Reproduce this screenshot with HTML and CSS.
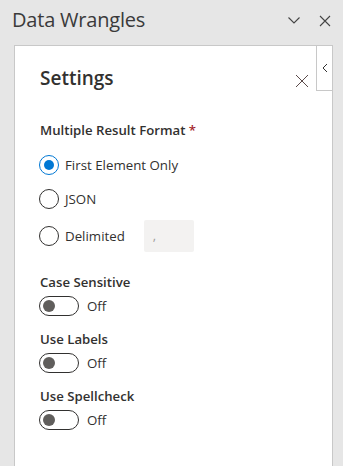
FILE: index.html
```html
<!DOCTYPE html>
<html>
<head>
<meta charset="utf-8">
<link rel="stylesheet" href="styles.css">
</head>
<body>
<div class="app">
  <header class="topbar">
    <div class="app-title">Data Wrangles</div>
    <div class="top-icons">
      <svg class="ico-chev" width="14" height="14" viewBox="0 0 14 14"><path d="M1.5 4.5 L7 10 L12.5 4.5" fill="none" stroke="#444" stroke-width="1.1"/></svg>
      <svg class="ico-x" width="12" height="12" viewBox="0 0 12 12"><path d="M1 1 L11 11 M11 1 L1 11" fill="none" stroke="#444" stroke-width="1.1"/></svg>
    </div>
  </header>
  <main class="panel">
    <div class="tab">
      <svg width="6" height="10" viewBox="0 0 6 10"><path d="M5 1 L1 5 L5 9" fill="none" stroke="#333" stroke-width="1"/></svg>
    </div>
    <div class="panel-head">
      <h1 class="panel-title">Settings</h1>
      <svg class="panel-close" width="14" height="14" viewBox="0 0 14 14"><path d="M1 1 L13 13 M13 1 L1 13" fill="none" stroke="#5a4a4a" stroke-width="1"/></svg>
    </div>
    <div class="field-label">Multiple Result Format <span class="req">*</span></div>
    <div class="choices">
      <div class="choice">
        <span class="radio checked"></span><span class="choice-text">First Element Only</span>
      </div>
      <div class="choice">
        <span class="radio"></span><span class="choice-text">JSON</span>
      </div>
      <div class="choice choice-input">
        <span class="radio"></span><span class="choice-text">Delimited</span>
        <div class="delim">,</div>
      </div>
    </div>
    <div class="toggle-group first">
      <div class="field-label">Case Sensitive</div>
      <div class="toggle-row"><span class="toggle"><span class="knob"></span></span><span class="toggle-text">Off</span></div>
    </div>
    <div class="toggle-group">
      <div class="field-label">Use Labels</div>
      <div class="toggle-row"><span class="toggle"><span class="knob"></span></span><span class="toggle-text">Off</span></div>
    </div>
    <div class="toggle-group">
      <div class="field-label">Use Spellcheck</div>
      <div class="toggle-row"><span class="toggle"><span class="knob"></span></span><span class="toggle-text">Off</span></div>
    </div>
  </main>
</div>
</body>
</html>
```

FILE: styles.css
```css
* { box-sizing: border-box; }
html, body { margin: 0; padding: 0; }
body {
  background: #e6e6e6;
  font-family: "Segoe UI", "Open Sans", "Noto Sans", sans-serif;
  color: #323130;
  width: 343px;
  height: 466px;
  overflow: hidden;
}
.app { display: flex; flex-direction: column; height: 466px; }
.topbar {
  height: 45px;
  flex: none;
  display: flex;
  align-items: flex-start;
  justify-content: space-between;
  padding: 6px 12px 0 12px;
}
.app-title {
  font-size: 20px;
  line-height: 28px;
  font-weight: 400;
  color: #3a3a3a;
  letter-spacing: -0.2px;
}
.top-icons { display: flex; gap: 18px; padding-top: 9px; }
.ico-chev { display: block; margin-top: -2px; }
.ico-x { display: block; }
.panel {
  position: relative;
  flex: 1;
  margin: 0 10px 0 14px;
  background: #fff;
  border: 1px solid #c8c8c8;
  border-bottom: none;
  padding: 0 0 0 25px;
}
.tab {
  position: absolute;
  top: 0;
  right: 0;
  width: 16px;
  height: 45px;
  border-left: 1px solid #c8c8c8;
  border-bottom: 1px solid #c8c8c8;
  display: flex;
  justify-content: center;
  padding-top: 17px;
}
.tab svg { display: block; }
.panel-head {
  display: flex;
  align-items: center;
  justify-content: space-between;
  margin-top: 18px;
  height: 28px;
  padding-right: 23px;
}
.panel-title {
  margin: 0;
  font-size: 19px;
  line-height: 28px;
  font-weight: 600;
  color: #323130;
}
.panel-close { display: block; margin-top: 6px; }
.field-label {
  font-size: 13.2px;
  line-height: 20px;
  font-weight: 600;
  color: #323130;
}
.panel-head + .field-label { margin-top: 28px; }
.req { color: #a4262c; }
.choices { display: flex; flex-direction: column; margin-top: 4px; }
.choice {
  display: flex;
  align-items: center;
  min-height: 26px;
  margin-top: 8px;
}
.choice-input { min-height: 32px; }
.radio {
  width: 20px;
  height: 20px;
  border-radius: 50%;
  border: 1px solid #323130;
  flex: none;
  position: relative;
  margin-left: -1px;
}
.radio.checked { border-color: #0078d4; }
.radio.checked::after {
  content: "";
  position: absolute;
  left: 4px;
  top: 4px;
  width: 10px;
  height: 10px;
  border-radius: 50%;
  background: #0078d4;
}
.choice-text {
  font-size: 13.3px;
  line-height: 20px;
  margin-left: 6px;
  color: #323130;
}
.delim {
  width: 50px;
  height: 32px;
  background: #f3f2f1;
  border-radius: 2px;
  margin-left: 19px;
  color: #a19f9d;
  font-size: 13px;
  line-height: 30px;
  padding-left: 9px;
}
.toggle-group { margin-top: 13px; }
.toggle-group.first { margin-top: 20px; }
.toggle-row {
  display: flex;
  align-items: center;
  margin-top: 4px;
  height: 20px;
}
.toggle {
  width: 40px;
  height: 20px;
  border: 1px solid #323130;
  border-radius: 10px;
  display: flex;
  align-items: center;
  padding-left: 3px;
  margin-left: -1px;
}
.knob {
  width: 12px;
  height: 12px;
  border-radius: 50%;
  background: #605e5c;
}
.toggle-text {
  font-size: 13.3px;
  line-height: 20px;
  margin-left: 8px;
  color: #323130;
}
```
